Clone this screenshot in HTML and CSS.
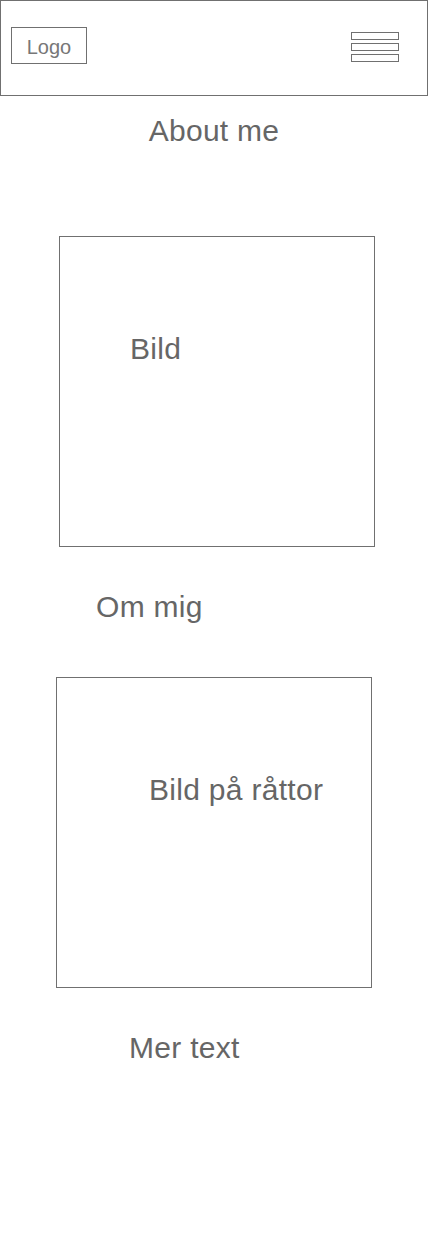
FILE: index.html
```html
<!DOCTYPE html>
<html lang="sv">
<head>
<meta charset="utf-8">
<title>About me</title>
<link rel="stylesheet" href="styles.css">
</head>
<body>
<header class="header">
  <div class="logo">Logo</div>
  <div class="menu">
    <span class="bar"></span>
    <span class="bar"></span>
    <span class="bar"></span>
  </div>
</header>
<main class="page">
  <h1 class="title">About me</h1>
  <div class="pic pic-one"><span class="pic-label">Bild</span></div>
  <p class="text text-om">Om mig</p>
  <div class="pic pic-two"><span class="pic-label">Bild på råttor</span></div>
  <p class="text text-mer">Mer text</p>
</main>
</body>
</html>
```
FILE: styles.css
```css
* { box-sizing: border-box; }
html, body { margin: 0; padding: 0; background: #fff; }
body {
  font-family: "Liberation Sans", Arial, Helvetica, sans-serif;
  color: #666;
  width: 428px;
  min-height: 1237px;
}
.header {
  height: 96px;
  width: 428px;
  border: 1px solid #707070;
  display: flex;
  justify-content: space-between;
  align-items: flex-start;
  padding: 26px 28px 0 10px;
}
.logo {
  width: 76px;
  height: 37px;
  border: 1px solid #707070;
  font-size: 20px;
  line-height: 31px;
  padding-top: 4px;
  text-align: center;
  color: #777;
}
.menu {
  margin-top: 5px;
  display: flex;
  flex-direction: column;
  gap: 3px;
  width: 48px;
}
.bar {
  display: block;
  height: 8px;
  border: 1px solid #707070;
}
.page { display: flex; flex-direction: column; align-items: flex-start; }
.title {
  margin: 20px 0 0;
  width: 100%;
  text-align: center;
  font-size: 30px;
  font-weight: normal;
  line-height: 30px;
  letter-spacing: 0.25px;
}
.pic {
  width: 316px;
  height: 311px;
  border: 1px solid #707070;
  font-size: 30px;
  line-height: 30px;
  letter-spacing: 0.3px;
}
.pic-one { margin: 90px 0 0 59px; padding: 97px 0 0 70px; }
.pic-two { margin: 55px 0 0 56px; padding: 97px 0 0 92px; }
.pic-label { display: block; white-space: nowrap; }
.text {
  font-size: 30px;
  line-height: 30px;
  letter-spacing: 0.3px;
  margin: 0;
}
.text-om { margin: 45px 0 0 96px; }
.text-mer { margin: 45px 0 0 129px; }
```
